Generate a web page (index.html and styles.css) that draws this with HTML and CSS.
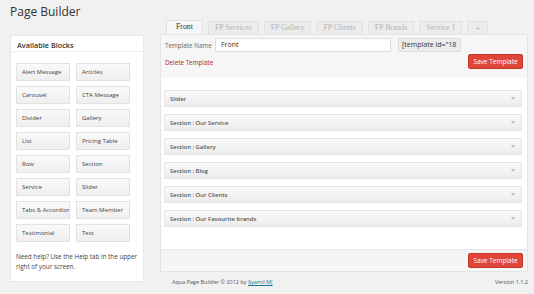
FILE: index.html
```html
<!DOCTYPE html>
<html>
<head>
<meta charset="utf-8">
<link rel="stylesheet" href="styles.css">
</head>
<body>
<div class="wrap">
  <h1 class="title">Page Builder</h1>
  <div class="columns">
    <aside class="sidebar">
      <div class="side-head">Available Blocks</div>
      <div class="blocks">
        <div class="block">Alert Message</div>
        <div class="block">Articles</div>
        <div class="block">Carousel</div>
        <div class="block">CTA Message</div>
        <div class="block">Divider</div>
        <div class="block">Gallery</div>
        <div class="block">List</div>
        <div class="block">Pricing Table</div>
        <div class="block">Row</div>
        <div class="block">Section</div>
        <div class="block">Service</div>
        <div class="block">Slider</div>
        <div class="block">Tabs &amp; Accordion</div>
        <div class="block">Team Member</div>
        <div class="block">Testimonial</div>
        <div class="block">Text</div>
      </div>
      <p class="help">Need help? Use the Help tab in the upper right of your screen.</p>
    </aside>
    <main class="main">
      <div class="tabs">
        <span class="tab active">Front</span>
        <span class="tab">FP Services</span>
        <span class="tab">FP Gallery</span>
        <span class="tab">FP Clients</span>
        <span class="tab">FP Brands</span>
        <span class="tab">Service 1</span>
        <span class="tab plus">+</span>
      </div>
      <div class="panel">
        <div class="panel-head">
          <div class="name-row">
            <label class="name-label">Template Name</label>
            <div class="name-input">Front</div>
            <div class="shortcode">[template id="18</div>
          </div>
          <div class="action-row">
            <a class="delete">Delete Template</a>
            <button class="save">Save Template</button>
          </div>
        </div>
        <div class="panel-body">
          <div class="item"><span>Slider</span><span class="arrow"></span></div>
          <div class="item"><span>Section : Our Service</span><span class="arrow"></span></div>
          <div class="item"><span>Section : Gallery</span><span class="arrow"></span></div>
          <div class="item"><span>Section : Blog</span><span class="arrow"></span></div>
          <div class="item"><span>Section : Our Clients</span><span class="arrow"></span></div>
          <div class="item"><span>Section : Our Favourite brands</span><span class="arrow"></span></div>
        </div>
        <div class="panel-foot">
          <button class="save">Save Template</button>
        </div>
      </div>
      <div class="credits">
        <span>Aqua Page Builder © 2012 by <a class="author">Syamil MJ</a></span>
        <span>Version 1.1.2</span>
      </div>
    </main>
  </div>
</div>
</body>
</html>
```

FILE: styles.css
```css
* { box-sizing: border-box; }
html, body { margin: 0; padding: 0; }
body {
  background: #f1f1f1;
  font-family: "Open Sans", "DejaVu Sans", sans-serif;
  color: #333;
  width: 534px;
  height: 294px;
  overflow: hidden;
}
.wrap { padding: 0 6px 0 10px; }
.title {
  margin: 0;
  padding-top: 3px;
  height: 20px;
  font-size: 12px;
  font-weight: 400;
  color: #333;
  line-height: 17px;
}
.columns {
  display: flex;
  gap: 16px;
  align-items: flex-start;
}
.sidebar {
  width: 134px;
  margin-top: 15px;
  background: #fff;
  border: 1px solid #e8e8e8;
  height: 247px;
}
.side-head {
  height: 16px;
  padding: 4px 0 0 6px;
  font-size: 7.3px;
  font-weight: 600;
  color: #333;
  border-bottom: 1px solid #eee;
}
.blocks {
  display: grid;
  grid-template-columns: 54px 54px;
  column-gap: 6px;
  row-gap: 5px;
  padding: 11px 0 0 5px;
}
.block {
  height: 18px;
  line-height: 16px;
  padding-left: 5px;
  font-size: 6px;
  color: #444;
  background: linear-gradient(#f9f9f9, #efefef);
  border: 1px solid #e2e2e2;
  white-space: nowrap;
  overflow: hidden;
}
.help {
  margin: 10px 0 0 5px;
  font-size: 6.3px;
  line-height: 10px;
  color: #444;
}
.main { width: 368px; }
.tabs {
  display: flex;
  gap: 5px;
  padding-left: 6px;
  height: 14px;
  align-items: flex-end;
}
.tab {
  font-family: "Liberation Serif", "DejaVu Serif", serif;
  font-size: 7.8px;
  color: #b5b5b5;
  height: 13px;
  line-height: 12px;
  padding: 0 6px;
  background: #ececec;
  border: 1px solid #e2e2e2;
  border-bottom: none;
}
.tab.active {
  height: 14px;
  background: #f6f6f6;
  color: #333;
  padding: 0 9px;
}
.tab.plus { font-family: "Open Sans", sans-serif; padding: 0 7px; }
.panel {
  border: 1px solid #e4e4e4;
  background: #fff;
}
.panel-head {
  background: #f6f6f6;
  height: 43px;
  padding: 3px 4px 0 4px;
}
.name-row {
  display: flex;
  align-items: center;
  height: 14px;
}
.name-label {
  font-size: 6.3px;
  color: #666;
  width: 50px;
}
.name-input {
  width: 176px;
  height: 14px;
  background: #fff;
  border: 1px solid #ddd;
  font-size: 7px;
  line-height: 12px;
  padding-left: 5px;
  color: #333;
}
.shortcode {
  margin-left: 7px;
  width: 63px;
  height: 14px;
  background: #ececec;
  border: 1px solid #ddd;
  font-size: 7px;
  line-height: 12px;
  padding-left: 3px;
  color: #333;
  overflow: hidden;
  white-space: nowrap;
}
.action-row {
  display: flex;
  justify-content: space-between;
  align-items: flex-start;
  margin-top: 2px;
}
.delete {
  font-size: 6.3px;
  color: #a52a2a;
  margin-top: 4px;
}
.save {
  width: 55px;
  height: 15px;
  border: 1px solid #c7352b;
  border-radius: 2px;
  background: #df4539;
  color: #fff;
  font-family: "Open Sans", sans-serif;
  font-size: 6.5px;
  padding: 0;
}
.panel-body {
  padding: 12px 5px 22px 3px;
  display: flex;
  flex-direction: column;
  gap: 7px;
}
.item {
  height: 17px;
  display: flex;
  justify-content: space-between;
  align-items: center;
  padding: 0 6px 0 5px;
  background: linear-gradient(#fafafa, #ededed);
  border: 1px solid #e6e6e6;
  font-size: 5.9px;
  font-weight: 600;
  color: #555;
}
.arrow {
  width: 0;
  height: 0;
  border-left: 2px solid transparent;
  border-right: 2px solid transparent;
  border-top: 3px solid #bbb;
}
.panel-foot {
  height: 22px;
  background: linear-gradient(#f2f2f2, #f8f8f8);
  border-top: 1px solid #e8e8e8;
  display: flex;
  justify-content: flex-end;
  align-items: center;
  padding-right: 4px;
}
.credits {
  display: flex;
  justify-content: space-between;
  padding: 6px 0 0 12px;
  font-size: 5.5px;
  color: #555;
}
.author { color: #21759b; text-decoration: underline; }
```
